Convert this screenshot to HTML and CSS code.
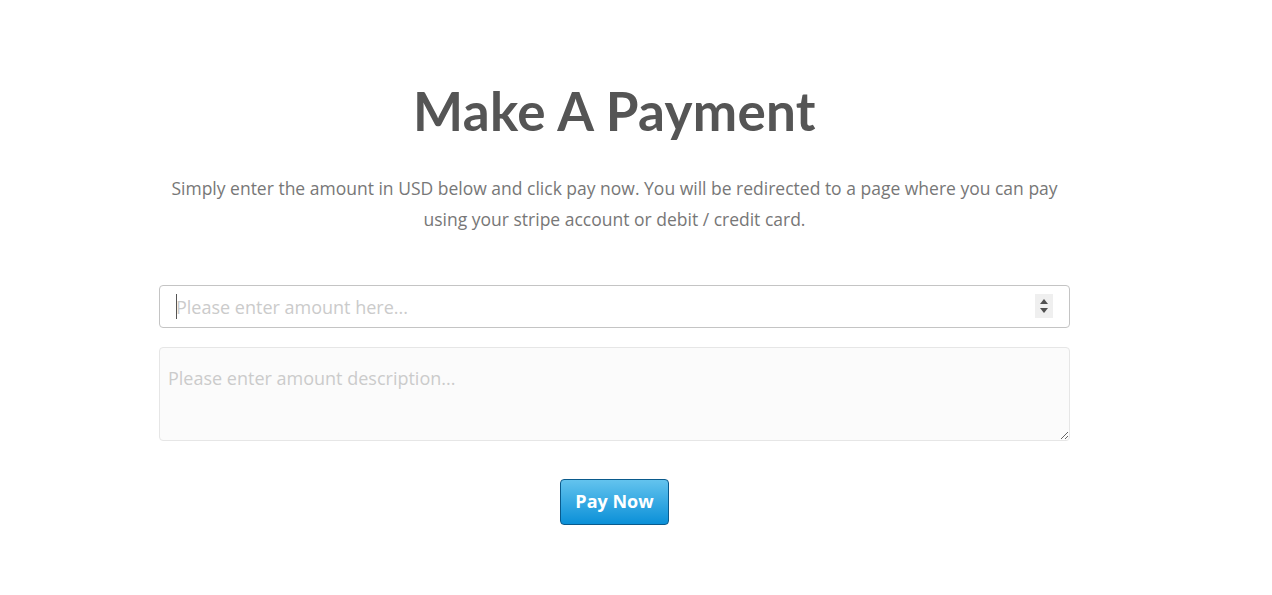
FILE: index.html
```html
<!DOCTYPE html>
<html lang="en">
<head>
<meta charset="utf-8">
<title>Make A Payment</title>
<link rel="stylesheet" href="styles.css">
</head>
<body>
<main class="page">
  <section class="payment">
    <h1 class="payment-title">Make A Payment</h1>
    <p class="payment-intro">Simply enter the amount in USD below and click pay now. You will be redirected to a page where you can pay using your stripe account or debit / credit card.</p>
    <form class="payment-form">
      <div class="amount-wrap">
        <input class="field field-amount" type="number" placeholder="Please enter amount here...">
        <span class="caret"></span>
        <span class="spinner"><span class="tri tri-up"></span><span class="tri tri-down"></span></span>
      </div>
      <textarea class="field field-desc" placeholder="Please enter amount description..."></textarea>
      <div class="actions">
        <button class="btn-pay" type="button">Pay Now</button>
      </div>
    </form>
  </section>
</main>
</body>
</html>
```

FILE: styles.css
```css
* { box-sizing: border-box; }
html, body { margin: 0; padding: 0; background: #fff; }
body { font-family: "Open Sans", "Liberation Sans", sans-serif; }
.page { padding: 75px 0 0 159px; }
.payment { width: 911px; display: flex; flex-direction: column; align-items: center; }
.payment-title {
  margin: 0;
  font-family: "Lato", "Open Sans", sans-serif;
  font-weight: 700;
  font-size: 53px;
  line-height: 72px;
  color: #555;
  letter-spacing: 0.3px;
}
.payment-intro {
  margin: 26px 0 0;
  font-size: 17.5px;
  line-height: 31px;
  color: #777;
  text-align: center;
}
.payment-form { width: 100%; margin-top: 50px; display: flex; flex-direction: column; gap: 19px; }
.amount-wrap { position: relative; }
.field {
  display: block;
  width: 100%;
  font-family: "Open Sans", sans-serif;
  font-size: 18px;
  color: #555;
  border-radius: 4px;
  outline: none;
}
.field::placeholder { color: #cbcbcb; }
.field-amount { height: 43px; padding: 0 16px; border: 1px solid #c4c4c4; background: #fff; -moz-appearance: textfield; }
.field-amount::-webkit-inner-spin-button,
.field-amount::-webkit-outer-spin-button { -webkit-appearance: none; margin: 0; }
.caret {
  position: absolute;
  left: 17px;
  top: 9px;
  width: 1px;
  height: 25px;
  background: #555;
}
.spinner {
  position: absolute;
  right: 17px;
  top: 9px;
  width: 18px;
  height: 24px;
  background: #efefef;
  display: flex;
  flex-direction: column;
  align-items: center;
  justify-content: center;
  gap: 4px;
}
.tri { width: 0; height: 0; border-left: 4px solid transparent; border-right: 4px solid transparent; }
.tri-up { border-bottom: 5px solid #505050; }
.tri-down { border-top: 5px solid #505050; }
.field-desc {
  height: 94px;
  padding: 19px 8px 15px;
  border: 1px solid #e6e6e6;
  background: #fbfbfb;
  resize: vertical;
  line-height: 22px;
}
.actions { display: flex; justify-content: center; margin-top: 19px; }
.btn-pay {
  width: 109px;
  height: 46px;
  border: 1px solid #0a5a8c;
  border-radius: 4px;
  background: linear-gradient(#63c3ee, #0b90d8);
  color: #fff;
  font-family: "Open Sans", sans-serif;
  font-weight: 700;
  font-size: 18px;
  cursor: pointer;
  padding: 0 0 2px;
}
```
